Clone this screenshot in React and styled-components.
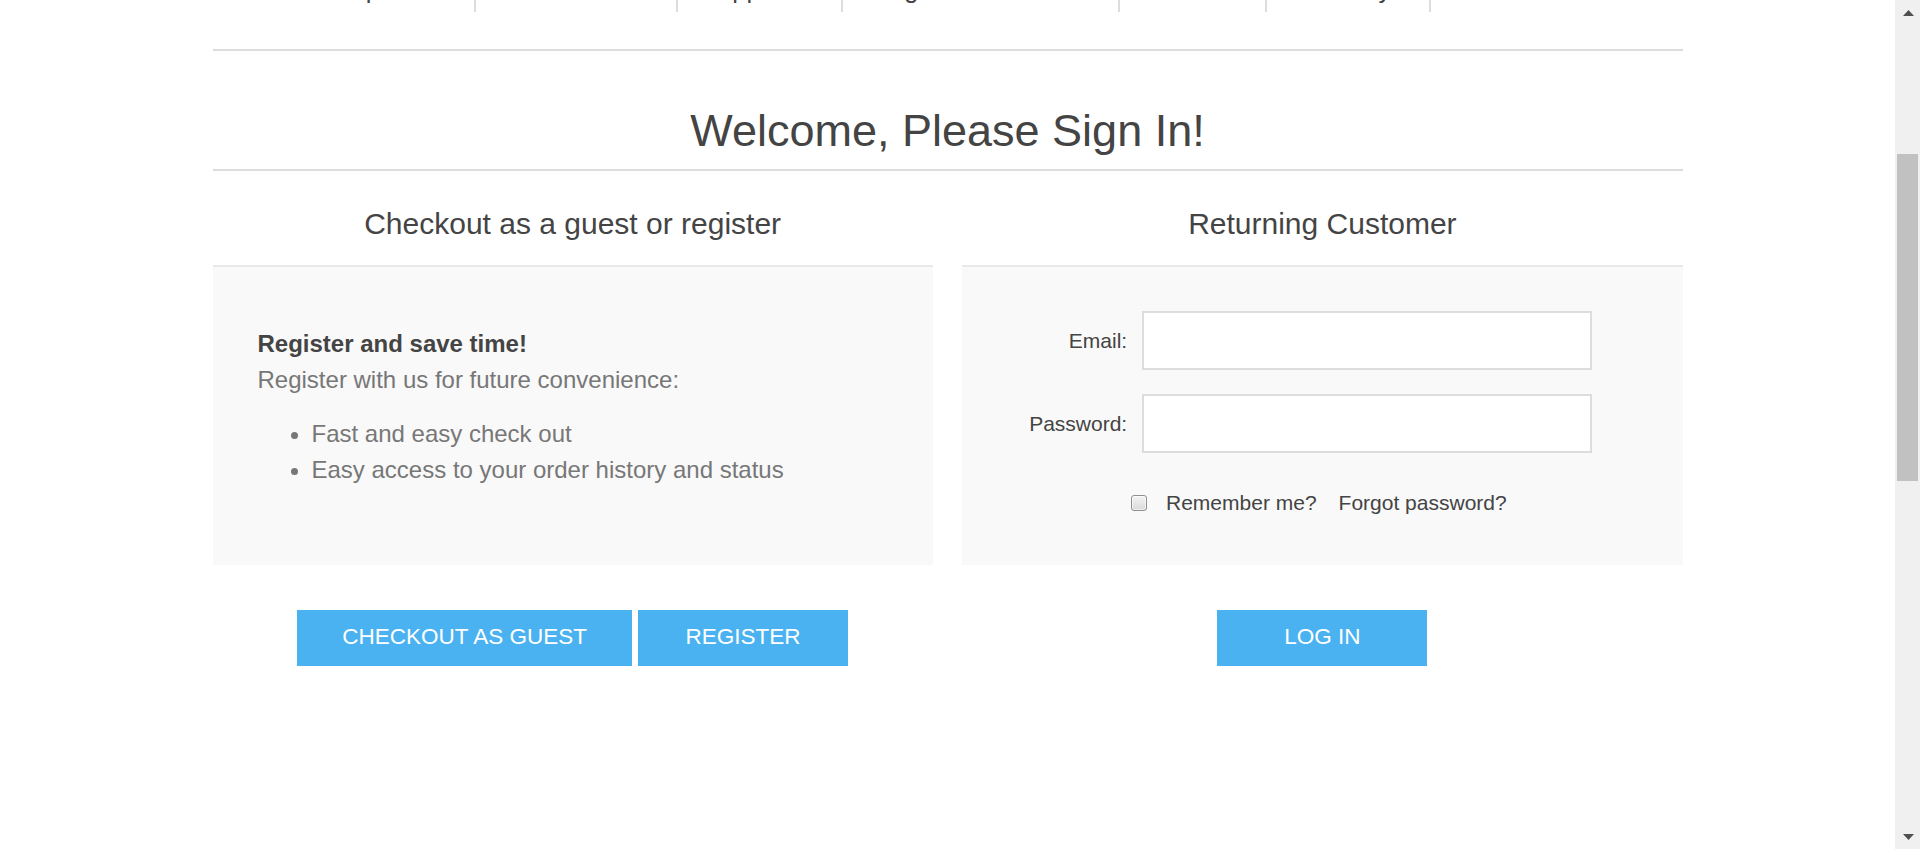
import React from 'react';
import styled, { createGlobalStyle } from 'styled-components';

const GlobalStyle = createGlobalStyle`
  html, body { margin: 0; padding: 0; height: 100%; overflow: hidden; background: #fff; }
  body { font-family: "Liberation Sans", Arial, sans-serif; color: #777; }
  *, *::before, *::after { box-sizing: border-box; }
`;

const Viewport = styled.div`
  display: flex;
  width: 1920px;
  height: 849px;
  overflow: hidden;
`;

const Main = styled.main`
  flex: 1;
  min-width: 0;
  height: 100%;
  overflow: hidden;
`;

/* the page is scrolled down a little: its top lies above the window */
const Page = styled.div`
  width: 1470px;
  margin: -29px auto 0;
`;

const MenuBar = styled.nav`
  border-bottom: 2px solid #ddd;
  padding-bottom: 37px;
`;

const MenuList = styled.ul`
  display: flex;
  justify-content: center;
  list-style: none;
  margin: 0;
  padding: 0;
`;

const MenuItem = styled.li`
  height: 41px;
  padding: 0 37.5px;
  border-right: 2px solid #ddd;
  font-size: 25.5px;
  line-height: 36px;
  color: #444;
  white-space: nowrap;
  &:last-child { border-right: none; }
`;

const PageTitle = styled.div`
  padding: 53px 15px 11px;
  border-bottom: 2px solid #ddd;
  text-align: center;
`;

const Heading = styled.h1`
  margin: 0;
  font-size: 45px;
  line-height: 54px;
  font-weight: normal;
  color: #444;
`;

const Columns = styled.div`
  display: flex;
  justify-content: space-between;
  margin-top: 35px;
`;

const Column = styled.section`
  width: 49%;
  display: flex;
  flex-direction: column;
`;

const ColumnTitle = styled.h2`
  margin: 0 0 23px;
  font-size: 30px;
  line-height: 36px;
  font-weight: normal;
  color: #444;
  text-align: center;
`;

const Panel = styled.div`
  height: 300px;
  border-top: 2px solid #e9e9e9;
  background: #f9f9f9;
  padding: ${p => (p.$form ? '44px 0 0' : '59px 45px 0')};
`;

const Lead = styled.strong`
  display: block;
  font-size: 24px;
  line-height: 36px;
  font-weight: bold;
  color: #444;
`;

const Text = styled.p`
  margin: 0;
  font-size: 24px;
  line-height: 36px;
  color: #777;
`;

const Bullets = styled.ul`
  margin: 18px 0 0;
  padding-left: 54px;
  list-style: disc;
  font-size: 24px;
  line-height: 36px;
  color: #777;
`;

const FieldRow = styled.div`
  display: flex;
  align-items: center;
  & + & { margin-top: 24px; }
`;

const FieldLabel = styled.label`
  width: 180px;
  padding-right: 15px;
  text-align: right;
  font-size: 21px;
  color: #444;
`;

const TextInput = styled.input`
  width: 450px;
  height: 59px;
  margin: 0;
  border: 2px solid #ddd;
  background: #fff;
  padding: 0 12px;
  font-size: 21px;
  font-family: inherit;
  outline: none;
`;

const RememberRow = styled.div`
  display: flex;
  align-items: center;
  justify-content: center;
  height: 32px;
  margin-top: 34px;
  padding-right: 7px;
  font-size: 21px;
  color: #444;
`;

const CheckBox = styled.input`
  appearance: none;
  -webkit-appearance: none;
  width: 16px;
  height: 16px;
  margin: 0 19px 0 0;
  border: 1px solid #8e8f8f;
  border-radius: 3px;
  background: linear-gradient(#f4f4f4, #d9d9d9);
  box-shadow: inset 0 0 0 1px rgba(255, 255, 255, 0.6);
`;

const ForgotLink = styled.a`
  margin-left: 22px;
  color: #444;
  text-decoration: none;
`;

const ButtonRow = styled.div`
  display: flex;
  justify-content: center;
  gap: 6px;
  margin-top: 45px;
`;

const ActionButton = styled.button`
  min-width: 210px;
  padding: 14px 45px 16px;
  border: none;
  background: #4ab2f1;
  color: #fff;
  font-family: inherit;
  font-size: 22.5px;
  line-height: 25.5px;
  text-transform: uppercase;
  cursor: pointer;
`;

/* browser scrollbar as it appears in the screenshot */
const ScrollBar = styled.div`
  width: 25px;
  height: 100%;
  background: #f0f0f0;
  display: flex;
  flex-direction: column;
`;

const ScrollArrow = styled.div`
  height: 25px;
  display: flex;
  align-items: center;
  justify-content: center;
  padding-left: 2px;
`;

const ScrollTrack = styled.div`
  flex: 1;
  padding: 129px 2px 0;
`;

const ScrollThumb = styled.div`
  height: 327px;
  background: #c1c1c1;
`;

const Arrow = ({ down }) => (
  <svg width="11" height="6" viewBox="0 0 11 6">
    <polygon points={down ? '0,0 11,0 5.5,6' : '0,6 11,6 5.5,0'} fill="#505050" />
  </svg>
);

const menu = ['Computers', 'Electronics', 'Apparel', 'Digital downloads', 'Books', 'Jewelry', 'Gift Cards'];

export default function App() {
  return (
    <>
      <GlobalStyle />
      <Viewport>
        <Main>
          <Page>
            <MenuBar>
              <MenuList>
                {menu.map(m => (
                  <MenuItem key={m}>{m}</MenuItem>
                ))}
              </MenuList>
            </MenuBar>
            <PageTitle>
              <Heading>Welcome, Please Sign In!</Heading>
            </PageTitle>
            <Columns>
              <Column>
                <ColumnTitle>Checkout as a guest or register</ColumnTitle>
                <Panel>
                  <Lead>Register and save time!</Lead>
                  <Text>Register with us for future convenience:</Text>
                  <Bullets>
                    <li>Fast and easy check out</li>
                    <li>Easy access to your order history and status</li>
                  </Bullets>
                </Panel>
                <ButtonRow>
                  <ActionButton>Checkout as Guest</ActionButton>
                  <ActionButton>Register</ActionButton>
                </ButtonRow>
              </Column>
              <Column>
                <ColumnTitle>Returning Customer</ColumnTitle>
                <Panel $form>
                  <FieldRow>
                    <FieldLabel htmlFor="email">Email:</FieldLabel>
                    <TextInput id="email" type="email" />
                  </FieldRow>
                  <FieldRow>
                    <FieldLabel htmlFor="password">Password:</FieldLabel>
                    <TextInput id="password" type="password" />
                  </FieldRow>
                  <RememberRow>
                    <CheckBox type="checkbox" id="remember" />
                    <label htmlFor="remember">Remember me?</label>
                    <ForgotLink href="#">Forgot password?</ForgotLink>
                  </RememberRow>
                </Panel>
                <ButtonRow>
                  <ActionButton>Log in</ActionButton>
                </ButtonRow>
              </Column>
            </Columns>
          </Page>
        </Main>
        <ScrollBar>
          <ScrollArrow><Arrow /></ScrollArrow>
          <ScrollTrack><ScrollThumb /></ScrollTrack>
          <ScrollArrow><Arrow down /></ScrollArrow>
        </ScrollBar>
      </Viewport>
    </>
  );
}
